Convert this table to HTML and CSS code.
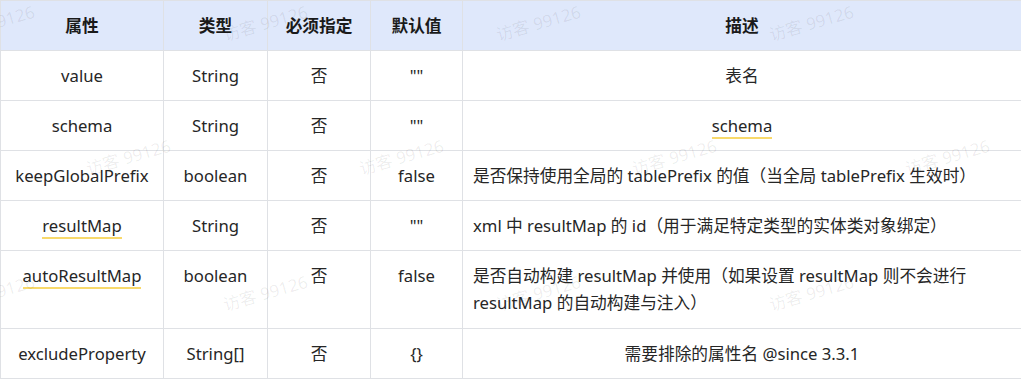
FILE: index.html
```html
<!DOCTYPE html>
<html lang="zh-CN">
<head>
<meta charset="utf-8">
<title>属性表</title>
<link rel="stylesheet" href="styles.css">
</head>
<body>
<div class="wrap">
  <table class="props">
    <colgroup>
      <col class="c1"><col class="c2"><col class="c3"><col class="c4"><col class="c5">
    </colgroup>
    <thead>
      <tr><th>属性</th><th>类型</th><th>必须指定</th><th>默认值</th><th>描述</th></tr>
    </thead>
    <tbody>
      <tr><td>value</td><td>String</td><td>否</td><td>""</td><td>表名</td></tr>
      <tr><td>schema</td><td>String</td><td>否</td><td>""</td><td><span class="term">schema</span></td></tr>
      <tr><td>keepGlobalPrefix</td><td>boolean</td><td>否</td><td>false</td><td class="left">是否保持使用全局的 tablePrefix 的值（当全局 tablePrefix 生效时）</td></tr>
      <tr><td><span class="term">resultMap</span></td><td>String</td><td>否</td><td>""</td><td class="left">xml 中 resultMap 的 id（用于满足特定类型的实体类对象绑定）</td></tr>
      <tr><td><span class="term">autoResultMap</span></td><td>boolean</td><td>否</td><td>false</td><td class="left multi">是否自动构建 resultMap 并使用（如果设置 resultMap 则不会进行 resultMap 的自动构建与注入）</td></tr>
      <tr><td>excludeProperty</td><td>String[]</td><td>否</td><td>{}</td><td>需要排除的属性名 @since 3.3.1</td></tr>
    </tbody>
  </table>
  <div class="marks" aria-hidden="true">
    <span class="wm" style="left:-8px;top:22px">访客 99126</span>
    <span class="wm" style="left:265px;top:22px">访客 99126</span>
    <span class="wm" style="left:538px;top:22px">访客 99126</span>
    <span class="wm" style="left:811px;top:22px">访客 99126</span>
    <span class="wm" style="left:128px;top:156px">访客 99126</span>
    <span class="wm" style="left:401px;top:156px">访客 99126</span>
    <span class="wm" style="left:674px;top:156px">访客 99126</span>
    <span class="wm" style="left:947px;top:156px">访客 99126</span>
    <span class="wm" style="left:-8px;top:292px">访客 99126</span>
    <span class="wm" style="left:265px;top:292px">访客 99126</span>
    <span class="wm" style="left:538px;top:292px">访客 99126</span>
    <span class="wm" style="left:811px;top:292px">访客 99126</span>
  </div>
</div>
</body>
</html>
```
FILE: styles.css
```css
html, body {
  margin: 0;
  padding: 0;
  background: #ffffff;
}
body {
  font-family: "Noto Sans", "Noto Sans CJK SC", sans-serif;
  font-size: 16.7px;
  color: #262626;
}
.wrap {
  position: relative;
  width: 1021px;
  overflow: hidden;
}
.props {
  width: 1021px;
  border-collapse: collapse;
  table-layout: fixed;
}
.c1 { width: 163px; }
.c2 { width: 104px; }
.c3 { width: 103px; }
.c4 { width: 92px; }
.c5 { width: 559px; }
.props th,
.props td {
  border: 1px solid #dfe1e5;
  padding: 11px 10px;
  line-height: 27px;
  text-align: center;
  vertical-align: top;
}
.props th {
  background: #dfe8fb;
  color: #1a1a1a;
  font-weight: 700;
}
.props td.left {
  text-align: left;
}
.props td.multi {
  padding-bottom: 12px;
}
.term {
  border-bottom: 2px solid #f8d96b;
}
.marks {
  position: absolute;
  inset: 0;
  pointer-events: none;
}
.wm {
  position: absolute;
  transform: translate(-50%, -50%) rotate(-16deg);
  white-space: nowrap;
  font-size: 17px;
  color: rgba(0, 0, 0, 0.07);
}
```
